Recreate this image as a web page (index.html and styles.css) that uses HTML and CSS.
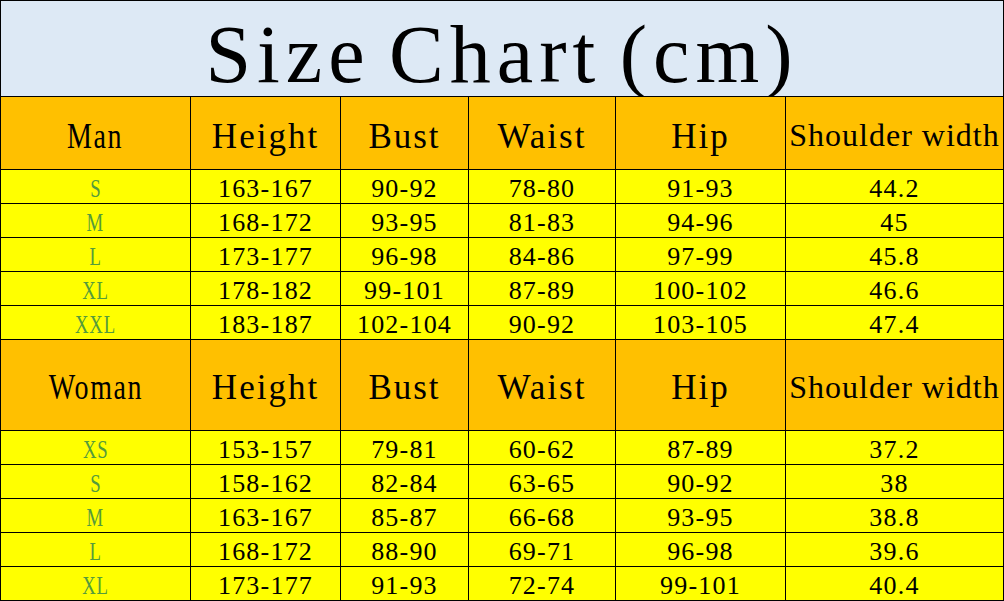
FILE: index.html
```html
<!DOCTYPE html>
<html>
<head>
<meta charset="utf-8">
<link rel="stylesheet" href="styles.css">
</head>
<body>
<div class="chart">
  <div class="title">Size Chart (cm)</div>

  <div class="cell head"><span class="cond">Man</span></div>
  <div class="cell head">Height</div>
  <div class="cell head">Bust</div>
  <div class="cell head">Waist</div>
  <div class="cell head">Hip</div>
  <div class="cell head small">Shoulder width</div>

  <div class="cell size"><span class="cond">S</span></div><div class="cell">163-167</div><div class="cell">90-92</div><div class="cell">78-80</div><div class="cell">91-93</div><div class="cell">44.2</div>
  <div class="cell size"><span class="cond">M</span></div><div class="cell">168-172</div><div class="cell">93-95</div><div class="cell">81-83</div><div class="cell">94-96</div><div class="cell">45</div>
  <div class="cell size"><span class="cond">L</span></div><div class="cell">173-177</div><div class="cell">96-98</div><div class="cell">84-86</div><div class="cell">97-99</div><div class="cell">45.8</div>
  <div class="cell size"><span class="cond">XL</span></div><div class="cell">178-182</div><div class="cell">99-101</div><div class="cell">87-89</div><div class="cell">100-102</div><div class="cell">46.6</div>
  <div class="cell size"><span class="cond">XXL</span></div><div class="cell">183-187</div><div class="cell">102-104</div><div class="cell">90-92</div><div class="cell">103-105</div><div class="cell">47.4</div>

  <div class="cell head tall"><span class="cond">Woman</span></div>
  <div class="cell head tall">Height</div>
  <div class="cell head tall">Bust</div>
  <div class="cell head tall">Waist</div>
  <div class="cell head tall">Hip</div>
  <div class="cell head small tall">Shoulder width</div>

  <div class="cell size"><span class="cond">XS</span></div><div class="cell">153-157</div><div class="cell">79-81</div><div class="cell">60-62</div><div class="cell">87-89</div><div class="cell">37.2</div>
  <div class="cell size"><span class="cond">S</span></div><div class="cell">158-162</div><div class="cell">82-84</div><div class="cell">63-65</div><div class="cell">90-92</div><div class="cell">38</div>
  <div class="cell size"><span class="cond">M</span></div><div class="cell">163-167</div><div class="cell">85-87</div><div class="cell">66-68</div><div class="cell">93-95</div><div class="cell">38.8</div>
  <div class="cell size"><span class="cond">L</span></div><div class="cell">168-172</div><div class="cell">88-90</div><div class="cell">69-71</div><div class="cell">96-98</div><div class="cell">39.6</div>
  <div class="cell size"><span class="cond">XL</span></div><div class="cell">173-177</div><div class="cell">91-93</div><div class="cell">72-74</div><div class="cell">99-101</div><div class="cell">40.4</div>
</div>
</body>
</html>
```

FILE: styles.css
```css
html, body {
  margin: 0;
  padding: 0;
  background: #ffffff;
}

.chart {
  box-sizing: border-box;
  width: 1004px;
  height: 601px;
  padding: 1px;
  background: #000000;
  display: grid;
  grid-template-columns: 189px 149px 127px 146px 169px 1fr;
  grid-template-rows: 95px 72px repeat(5, 33px) 90px repeat(5, 33px);
  gap: 1px;
  font-family: "Liberation Serif", "Times New Roman", serif;
  color: #000000;
}

.title {
  grid-column: 1 / -1;
  background: #dde9f5;
  display: flex;
  align-items: center;
  justify-content: center;
  font-size: 82px;
  letter-spacing: 6px;
  word-spacing: -8px;
  padding-top: 12px;
  white-space: nowrap;
}

.cell {
  box-sizing: border-box;
  background: #ffff00;
  display: flex;
  align-items: center;
  justify-content: center;
  font-size: 26px;
  letter-spacing: 1.2px;
  padding-top: 4px;
  white-space: nowrap;
}

.cell.size {
  color: #559b3c;
}

.cond {
  display: inline-block;
  transform: scaleX(0.72);
}

.cell.head {
  background: #ffc000;
  font-size: 35px;
  letter-spacing: 2px;
  padding-top: 7px;
}

.cell.head .cond {
  transform: scaleX(0.8);
}

.cell.head.tall {
  padding-top: 6px;
}

.cell.head.small {
  font-size: 32px;
  letter-spacing: 1px;
  padding-top: 5px;
}
```
